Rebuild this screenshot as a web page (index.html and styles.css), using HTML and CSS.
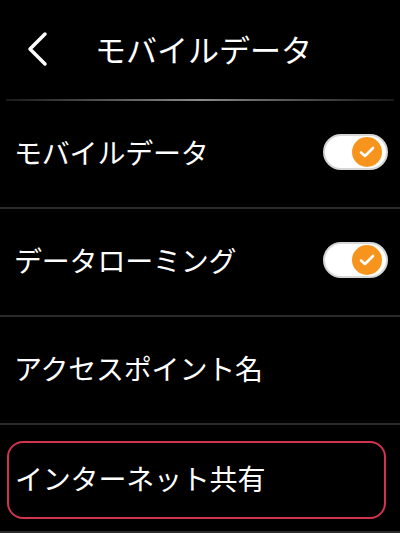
FILE: index.html
```html
<!DOCTYPE html>
<html lang="ja">
<head>
	<meta charset="utf-8">
	<title>モバイルデータ</title>
	<link rel="stylesheet" href="styles.css">
</head>
<body>
	<header class="top-bar">
		<svg class="back" width="24" height="36" viewBox="0 0 24 36">
			<polyline points="19,3 4,18 19,33" fill="none" stroke="#fff" stroke-width="3.5" stroke-linecap="round" stroke-linejoin="round"/>
		</svg>
		<h1 class="title">モバイルデータ</h1>
	</header>
	<div class="top-line"></div>

	<main class="list">
		<div class="row">
			<span class="label">モバイルデータ</span>
			<span class="toggle on">
				<span class="knob">
					<svg width="16" height="12" viewBox="0 0 16 12"><polyline points="2,6.5 6,10 14,2" fill="none" stroke="#fff" stroke-width="2.6" stroke-linecap="round" stroke-linejoin="round"/></svg>
				</span>
			</span>
		</div>
		<div class="row">
			<span class="label">データローミング</span>
			<span class="toggle on">
				<span class="knob">
					<svg width="16" height="12" viewBox="0 0 16 12"><polyline points="2,6.5 6,10 14,2" fill="none" stroke="#fff" stroke-width="2.6" stroke-linecap="round" stroke-linejoin="round"/></svg>
				</span>
			</span>
		</div>
		<div class="row">
			<span class="label">アクセスポイント名</span>
		</div>
		<div class="row row-focus">
			<div class="focus-box">
				<span class="label">インターネット共有</span>
			</div>
		</div>
	</main>
</body>
</html>
```

FILE: styles.css
```css
* {
	box-sizing: border-box;
}

body {
	margin: 0;
	background: #000;
	color: #fff;
	font-family: "Noto Sans CJK JP", "Noto Sans", sans-serif;
	width: 400px;
	height: 533px;
	overflow: hidden;
}

.top-bar {
	height: 99px;
	display: flex;
	align-items: center;
	padding-left: 26px;
	padding-bottom: 2px;
}

.back {
	display: block;
}

.title {
	margin: 0 0 0 45px;
	font-size: 31px;
	font-weight: normal;
	line-height: 1;
}

.top-line {
	height: 2px;
	margin: 0 6px;
	background: linear-gradient(to right, #1a1a1a, #8a8a8a 50%, #1a1a1a);
}

.row {
	height: 108px;
	border-bottom: 2px solid #2b2b2b;
	display: flex;
	align-items: center;
	justify-content: space-between;
	padding: 0 12px 5px 14px;
}

.label {
	font-size: 28px;
	line-height: 1;
	letter-spacing: -0.2px;
}

.toggle {
	width: 65px;
	height: 36px;
	border-radius: 18px;
	background: #fff;
	border: 2px solid #d6d6d6;
	display: flex;
	align-items: center;
	justify-content: flex-end;
	padding-right: 4px;
}

.knob {
	width: 30px;
	height: 30px;
	border-radius: 50%;
	background: #f7941d;
	display: flex;
	align-items: center;
	justify-content: center;
}

.knob svg {
	display: block;
}

.row-focus {
	padding: 16px 14px 12px 7px;
	align-items: stretch;
}

.focus-box {
	flex: 1;
	border: 2.5px solid #d2344f;
	border-radius: 16px;
	display: flex;
	align-items: center;
	padding: 0 0 4px 6px;
}
```
